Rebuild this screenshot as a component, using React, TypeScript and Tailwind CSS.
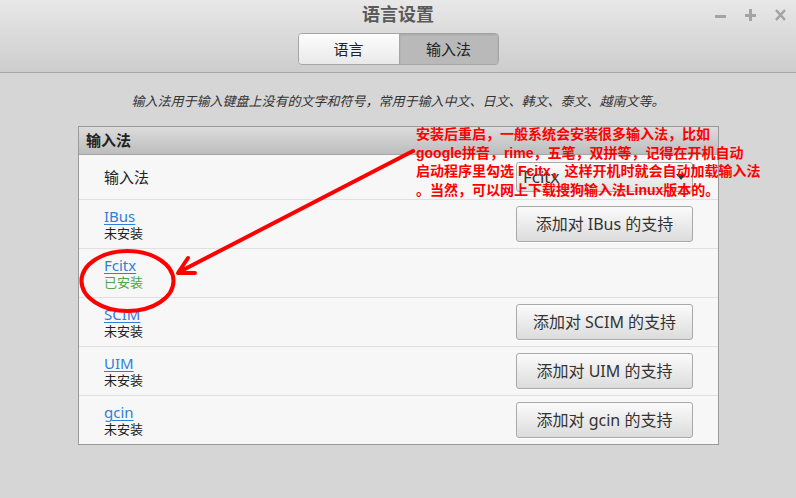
import React from "react";

const ui = { fontFamily: '"Noto Sans", "Noto Sans CJK SC", sans-serif' };
const red = { fontFamily: '"Liberation Sans", "Noto Sans CJK SC", sans-serif' };

function AddButton({ name }: { name: string }) {
  return (
    <button className="w-[177px] h-[36px] rounded-[3px] border border-[#a9a9a9] bg-gradient-to-b from-[#fbfbfb] to-[#dcdcdc] text-[16px] text-[#333] shadow-[0_1px_0_rgba(255,255,255,0.8)]">
      添加对 {name} 的支持
    </button>
  );
}

function Row({ name, installed, btn }: { name: string; installed?: boolean; btn: boolean }) {
  return (
    <div className="h-[49px] border-t border-[#e0e0e0] flex items-center pl-[25px] pr-[25px] justify-between">
      <div className="flex flex-col">
        <span className="text-[15px] leading-[18px] text-[#2f7fd8] underline decoration-[1px] underline-offset-[2px]">{name}</span>
        <span className={"text-[13px] leading-[16px] " + (installed ? "text-[#4ea44b]" : "text-[#222]")}>
          {installed ? "已安装" : "未安装"}
        </span>
      </div>
      {btn && <AddButton name={name} />}
    </div>
  );
}

export default function App() {
  return (
    <div className="w-[796px] h-[498px] bg-[#d6d6d6] relative overflow-hidden" style={ui}>
      {/* title bar */}
      <div className="h-[73px] border-b border-[#a8a8a8] bg-gradient-to-b from-[#e8e8e8] to-[#cdcdcd] flex flex-col items-center relative">
        <div className="h-[29px] flex items-center text-[18px] font-bold text-[#5a5a5a]">语言设置</div>
        <div className="absolute right-[10px] top-[9px] flex gap-[19px] items-center">
          <svg width="11" height="12" viewBox="0 0 11 12"><rect x="0" y="6" width="11" height="3" fill="#a3a3a3" /></svg>
          <svg width="11" height="12" viewBox="0 0 11 12"><rect x="0" y="5" width="11" height="3" fill="#a3a3a3" /><rect x="4" y="0" width="3" height="12" fill="#a3a3a3" /></svg>
          <svg width="11" height="12" viewBox="0 0 11 12"><path d="M1 1 L10 11 M10 1 L1 11" stroke="#a3a3a3" strokeWidth="2.6" /></svg>
        </div>
        <div className="mt-[4px] flex w-[201px] h-[32px] rounded-[4px] border border-[#a5a5a5] overflow-hidden text-[15px] text-[#222]">
          <div className="w-[100px] flex items-center justify-center bg-gradient-to-b from-[#fdfdfd] to-[#e9e9e9]">语言</div>
          <div className="flex-1 flex items-center justify-center bg-[#b9b9b9] border-l border-[#a5a5a5] shadow-[inset_0_1px_2px_rgba(0,0,0,0.12)]">输入法</div>
        </div>
      </div>

      {/* description */}
      <div className="pt-[19px] text-center text-[13px] leading-[18px] italic text-[#333]">
        输入法用于输入键盘上没有的文字和符号，常用于输入中文、日文、韩文、泰文、越南文等。
      </div>

      {/* panel */}
      <div className="ml-[78px] mt-[16px] w-[641px] border border-[#9a9a9a] bg-[#f7f7f7]">
        <div className="h-[28px] border-b border-[#a5a5a5] bg-gradient-to-b from-[#dcdcdc] to-[#bdbdbd] flex items-center pl-[7px] text-[15px] font-bold text-[#222]">
          输入法
        </div>
        <div className="h-[44px] flex items-center justify-between pl-[25px] pr-[25px]">
          <span className="text-[15px] text-[#222]">输入法</span>
          <div className="w-[177px] h-[30px] rounded-[3px] border border-[#a9a9a9] bg-gradient-to-b from-[#fbfbfb] to-[#e2e2e2] flex items-center justify-between pl-[6px] pr-[6px]">
            <span className="text-[17px] text-[#333]">Fcitx</span>
            <svg width="10" height="6" viewBox="0 0 10 6"><path d="M0 0 L10 0 L5 6 Z" fill="#333" /></svg>
          </div>
        </div>
        <Row name="IBus" btn />
        <Row name="Fcitx" installed btn={false} />
        <Row name="SCIM" btn />
        <Row name="UIM" btn />
        <Row name="gcin" btn />
      </div>

      {/* annotation */}
      <div className="absolute left-[416px] top-[125px] text-[14px] leading-[18.6px] font-bold text-[#ff0000] whitespace-nowrap" style={red}>
        <div>安装后重启，一般系统会安装很多输入法，比如</div>
        <div>google拼音，rime，五笔，双拼等，记得在开机自动</div>
        <div>启动程序里勾选 Fcitx，这样开机时就会自动加载输入法</div>
        <div>。当然，可以网上下载搜狗输入法Linux版本的。</div>
      </div>
      <svg className="absolute left-0 top-0 pointer-events-none" width="796" height="498" viewBox="0 0 796 498">
        <ellipse cx="127.5" cy="281" rx="46" ry="30" fill="none" stroke="#ff0000" strokeWidth="4" />
        <line x1="413" y1="151" x2="181" y2="271" stroke="#ff0000" strokeWidth="4" strokeLinecap="round" />
        <polyline points="188,258 178,273 195,273" fill="none" stroke="#ff0000" strokeWidth="4" strokeLinecap="round" strokeLinejoin="round" />
      </svg>
    </div>
  );
}
